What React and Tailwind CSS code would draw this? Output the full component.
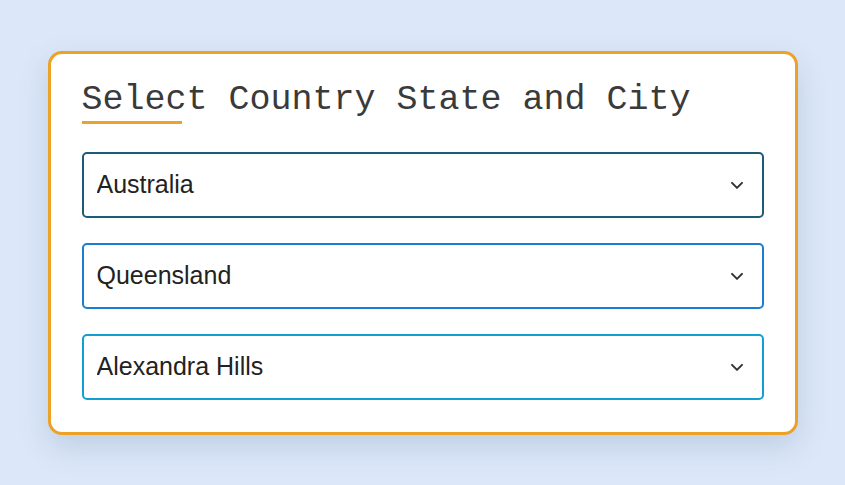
import React, { useState } from "react";

const fields = [
  { name: "country", options: ["Australia", "Canada", "India"], border: "border-[#1d5b78]" },
  { name: "state", options: ["Queensland", "Victoria", "Tasmania"], border: "border-[#1b7dcf]" },
  { name: "city", options: ["Alexandra Hills", "Brisbane", "Cairns"], border: "border-[#129fd4]" },
];

const Chevron = () => (
  <svg
    className="pointer-events-none absolute right-[17px] top-1/2 -translate-y-1/2"
    width="20"
    height="20"
    viewBox="0 0 24 24"
    fill="none"
    stroke="#333"
    strokeWidth="2.4"
    strokeLinecap="round"
    strokeLinejoin="round"
  >
    <path d="M6 9.5l6 6 6-6" />
  </svg>
);

const App = () => {
  const [form, setForm] = useState({
    country: "Australia",
    state: "Queensland",
    city: "Alexandra Hills",
  });

  const handleChange = (e) => {
    const { name, value } = e.target;
    setForm((prev) => ({ ...prev, [name]: value }));
  };

  return (
    <div className="flex min-h-screen items-center justify-center bg-[#dce8f9]">
      <div className="w-[750px] rounded-[14px] border-[3px] border-[#eba227] bg-white px-[31px] pb-[32px] pt-[26px] shadow-[0_12px_30px_rgba(60,90,130,0.18)]">
        <h1 className="font-['Liberation_Mono','Courier_New',monospace] text-[35px] font-normal leading-[40px] text-[#3a3a3a]">
          Select Country State and City
        </h1>
        <div className="mt-[1px] h-[3px] w-[100px] bg-[#eba227]" />

        <div className="mt-[28px] flex flex-col gap-[25px]">
          {fields.map((f) => (
            <div key={f.name} className="relative">
              <select
                name={f.name}
                value={form[f.name]}
                onChange={handleChange}
                className={`h-[66px] w-full appearance-none rounded-[5px] border-2 ${f.border} bg-white pl-[13px] font-['Liberation_Sans',Arial,sans-serif] text-[25px] text-[#222] outline-none`}
              >
                {f.options.map((o) => (
                  <option key={o} value={o}>
                    {o}
                  </option>
                ))}
              </select>
              <Chevron />
            </div>
          ))}
        </div>
      </div>
    </div>
  );
};

export default App;
